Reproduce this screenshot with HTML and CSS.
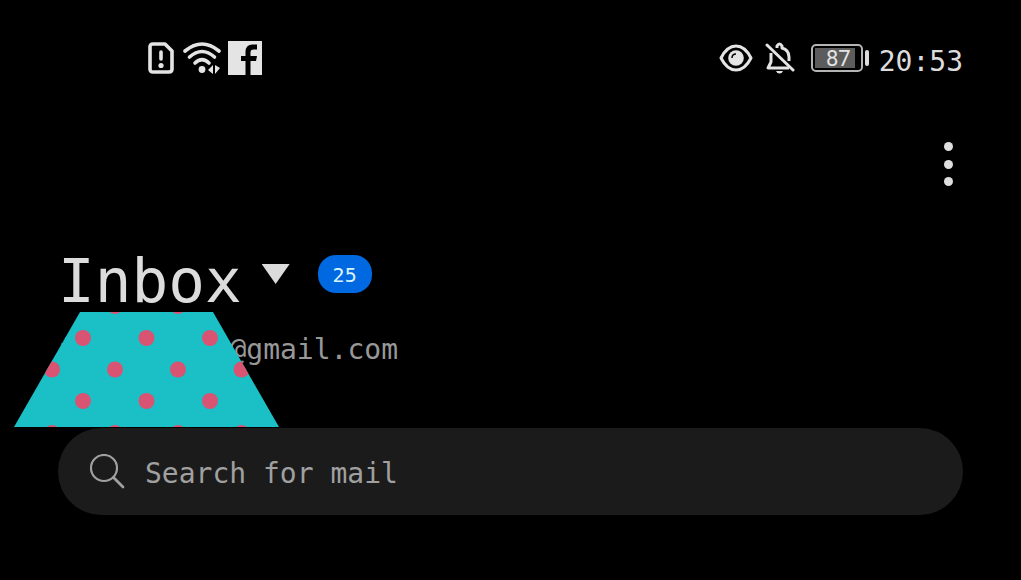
FILE: index.html
```html
<!DOCTYPE html>
<html lang="en">
<head>
  <meta charset="utf-8">
  <meta name="viewport" content="width=device-width, initial-scale=1">
  <title>Inbox</title>
  <link rel="stylesheet" href="styles.css">
</head>

<body>
  <div class="status-bar">
    <div class="status-left">
      <svg class="sim" width="26" height="32" viewBox="0 0 26 32" fill="none" stroke="#e4e4e4" stroke-width="3.600">
        <path d="M5 2H17L24 9V27Q24 30 21 30H5Q2 30 2 27V5Q2 2 5 2Z" stroke-linejoin="round"/>
        <path d="M13 10V17" stroke-linecap="round"/>
        <circle cx="13" cy="23.500" r="2.600" fill="#e4e4e4" stroke="none"/>
      </svg>
      <svg class="wifi" width="40" height="34" viewBox="0 0 40 34" fill="none" stroke="#e4e4e4" stroke-width="3.600" stroke-linecap="round">
        <path d="M3 10Q20 -4 37 10"/>
        <path d="M7.500 16Q20 5 32.500 16"/>
        <path d="M13 22Q20 15 27 22"/>
        <circle cx="20" cy="28.500" r="3.400" fill="#e4e4e4" stroke="none"/>
        <path d="M31 24V33L26 29ZM33 24V33L38 27Z" fill="#e4e4e4" stroke="none"/>
      </svg>
      <svg width="34" height="34" viewBox="0 0 34 34">
        <path d="M0 0H34V34H0Z" fill="#e4e4e4"/>
        <path d="M17.500 34V20H13V15H17.500V11Q17.500 3.500 24.500 3.500H29V8.500H25.500Q22.500 8.500 22.500 11.500V15H29L28 20H22.500V34Z" fill="#000"/>
      </svg>
    </div>
    <div class="status-right">
      <svg class="eye" width="34" height="28" viewBox="0 0 34 28" fill="none" stroke="#e4e4e4" stroke-width="3">
        <path d="M2 14C10 -2 24 -2 32 14C24 30 10 30 2 14Z" stroke-linejoin="round"/>
        <circle cx="17" cy="14" r="7.800" fill="#e4e4e4" stroke="none"/>
        <path d="M13 14Q13 10 17 10" stroke="#000" stroke-width="1.500"/>
      </svg>
      <svg class="bell" width="30" height="32" viewBox="0 0 30 32" fill="none" stroke="#e4e4e4" stroke-width="3">
        <path d="M12 6V4Q14.500 0 17 4V6Q24 8 24 15V19M6 11V20L3 26H24" stroke-linejoin="round"/>
        <path d="M2 3L28 28" stroke-linecap="round"/>
        <path d="M11 29H18Q17 31.500 14.500 31.500T11 29Z" fill="#e4e4e4" stroke="none"/>
      </svg>
      <div class="battery"><div class="battery-level">87</div></div>
      <div class="battery-tip"></div>
      <time>20:53</time>
    </div>
  </div>

  <div class="toolbar">
    <button class="menu" aria-label="More options">
      <span></span>
      <span></span>
      <span></span>
    </button>
  </div>

  <main>
    <div class="title-row">
      <h1>Inbox</h1>
      <button class="folders" aria-label="Choose folder"></button>
      <span class="badge">25</span>
    </div>
    <div class="account">
      <div class="address"><span>i</span><span>@gmail.com</span></div>
      <!-- patch over the account name -->
      <svg class="patch" width="265" height="115" viewBox="14 312 265 115">
        <defs>
          <clipPath id="shape"><path d="M80 312H213L279 427H14Z"/></clipPath>
        </defs>
        <g clip-path="url(#shape)">
          <path d="M14 312H279V427H14Z" fill="#1bbfc6"/>
          <g fill="#d95372">
            <circle cx="115" cy="306" r="8"/>
            <circle cx="178" cy="306" r="8"/>
            <circle cx="83" cy="338" r="8"/>
            <circle cx="146.500" cy="338" r="8"/>
            <circle cx="210" cy="338" r="8"/>
            <circle cx="52" cy="369.500" r="8"/>
            <circle cx="115" cy="369.500" r="8"/>
            <circle cx="178" cy="369.500" r="8"/>
            <circle cx="241.500" cy="369.500" r="8"/>
            <circle cx="83" cy="401" r="8"/>
            <circle cx="146.500" cy="401" r="8"/>
            <circle cx="210" cy="401" r="8"/>
            <circle cx="52" cy="433" r="8"/>
            <circle cx="115" cy="433" r="8"/>
            <circle cx="178" cy="433" r="8"/>
            <circle cx="241.500" cy="433" r="8"/>
          </g>
        </g>
      </svg>
    </div>
    <label class="search">
      <svg width="36" height="36" viewBox="0 0 36 36" fill="none" stroke="#a0a0a0" stroke-width="2.200" stroke-linecap="round">
        <circle cx="15" cy="14" r="13"/>
        <path d="M24.500 23.500L34 33" stroke-width="2.800"/>
      </svg>
      <input type="search" placeholder="Search for mail" aria-label="Search for mail">
    </label>
  </main>
</body>
</html>
```
FILE: styles.css
```css
* {
  box-sizing: border-box;
}
body {
  margin: 0;
  background-color: #000;
  color: #dcdcdc;
  font-family: "DejaVu Sans Mono", monospace;
  font-size: 28px;
}
button {
  padding: 0;
  border: 0;
  background: none;
  cursor: pointer;
}
.status-bar {
  display: flex;
  justify-content: space-between;
  align-items: center;
  height: 116px;
  padding: 0 58px 0 148px;
}
.status-left,
.status-right {
  display: flex;
  align-items: center;
}
.wifi {
  margin: 0 6px 0 8px;
}
.bell {
  margin: 0 16px 0 12px;
}
.battery {
  width: 52px;
  height: 28px;
  padding: 2px;
  border: 2px solid #b4b4b4;
  border-radius: 5px;
}
.battery-level {
  width: 40px;
  height: 20px;
  padding-right: 4px;
  background-color: #5c5c5c;
  color: #e4e4e4;
  font-family: Roboto, sans-serif;
  font-size: 22px;
  line-height: 22px;
  text-align: right;
}
.battery-tip {
  width: 4px;
  height: 16px;
  margin: 0 10px 0 2px;
  border-radius: 2px;
  background-color: #dcdcdc;
}
time {
  line-height: 32px;
  padding-top: 8px;
}
.toolbar {
  display: flex;
  justify-content: flex-end;
  padding: 24px 59px 0;
}
.menu {
  display: flex;
  flex-direction: column;
  justify-content: space-between;
  align-items: center;
  width: 28px;
  height: 48px;
  padding: 2px 0;
}
.menu span {
  width: 9px;
  height: 9px;
  border-radius: 50%;
  background-color: #dedede;
}
main {
  padding: 56px 58px 64px;
}
.title-row {
  display: flex;
  align-items: center;
  height: 72px;
}
h1 {
  margin: 0;
  padding-top: 2px;
  font-size: 61px;
  font-weight: normal;
  line-height: 72px;
}
.folders {
  width: 28px;
  height: 20px;
  margin: 0 28px 12px 20px;
  background-color: #dcdcdc;
  clip-path: polygon(0 0, 100% 0, 50% 100%);
}
.badge {
  width: 54px;
  height: 38px;
  margin-bottom: 12px;
  border-radius: 18px;
  background-color: #0068e0;
  color: #d8f4ff;
  font-size: 20px;
  line-height: 40px;
  text-align: center;
}
.account {
  position: relative;
  height: 112px;
  padding-top: 18px;
}
.address {
  display: flex;
  justify-content: space-between;
  width: 340px;
  color: #989898;
  line-height: 32px;
}
.patch {
  position: absolute;
  top: -4px;
  left: -44px;
}
.search {
  display: flex;
  align-items: center;
  gap: 20px;
  height: 87px;
  padding: 0 31px;
  border-radius: 44px;
  background-color: #1b1b1b;
}
.search input {
  flex: 1;
  min-width: 0;
  padding: 4px 0 0;
  border: 0;
  outline: 0;
  background: none;
  color: #dcdcdc;
  font: inherit;
}
.search input::placeholder {
  color: #a0a0a0;
}
```
